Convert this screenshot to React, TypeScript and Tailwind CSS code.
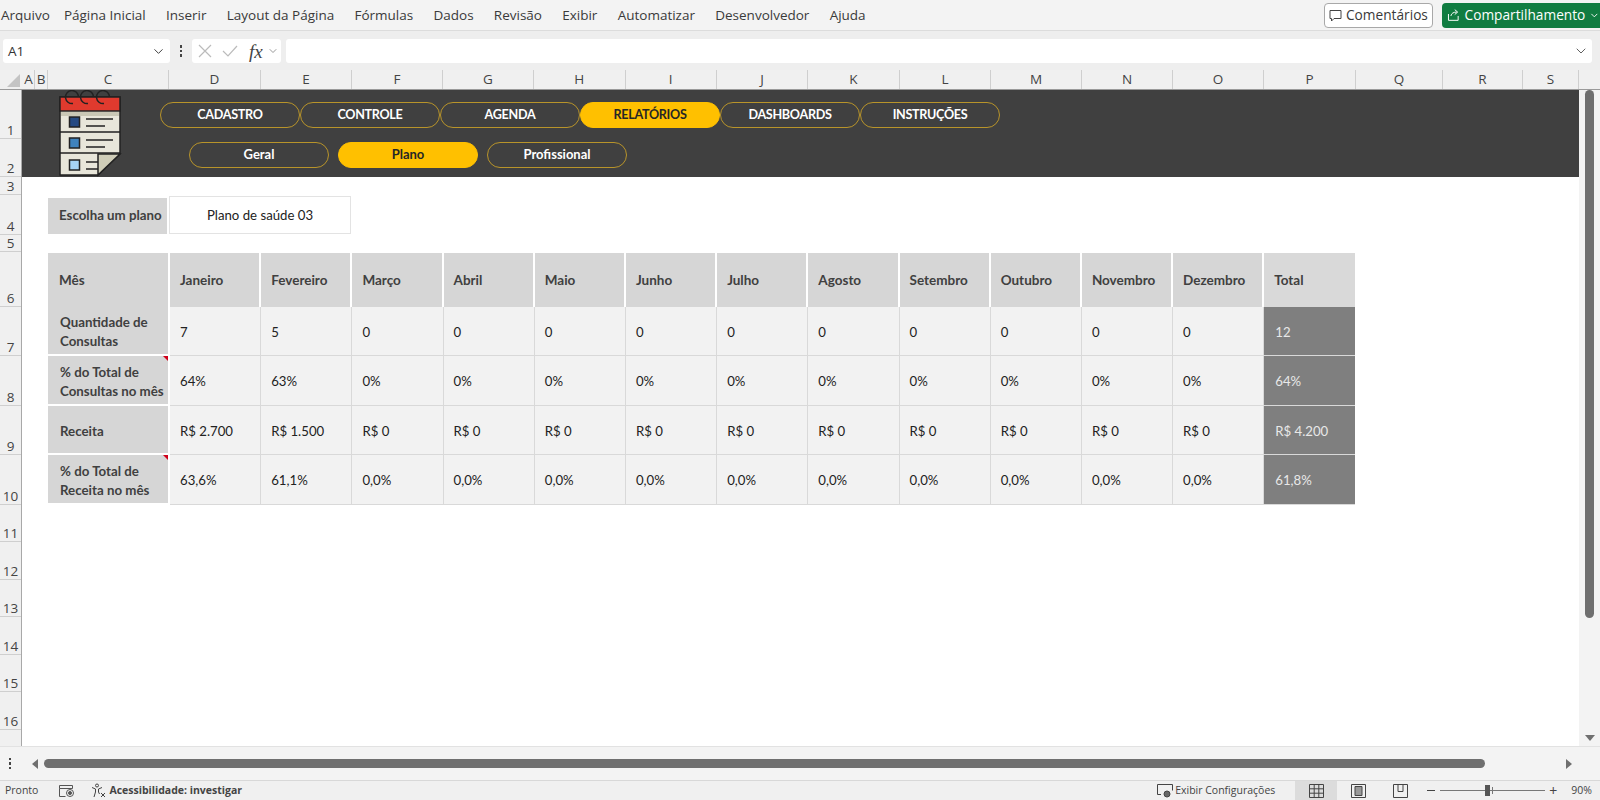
import { ChevronDown } from "lucide-react";

const ribbon = ["Página Inicial", "Inserir", "Layout da Página", "Fórmulas", "Dados", "Revisão", "Exibir", "Automatizar", "Desenvolvedor", "Ajuda"];

const columns = [
  { label: "A", w: "w-[12px]" },
  { label: "B", w: "w-[13px]" },
  { label: "C", w: "w-[121px]" },
  { label: "D", w: "w-[92px]" },
  { label: "E", w: "w-[91px]" },
  { label: "F", w: "w-[91px]" },
  { label: "G", w: "w-[91px]" },
  { label: "H", w: "w-[91.5px]" },
  { label: "I", w: "w-[91.5px]" },
  { label: "J", w: "w-[91px]" },
  { label: "K", w: "w-[92px]" },
  { label: "L", w: "w-[91px]" },
  { label: "M", w: "w-[91px]" },
  { label: "N", w: "w-[91px]" },
  { label: "O", w: "w-[91px]" },
  { label: "P", w: "w-[92px]" },
  { label: "Q", w: "w-[87px]" },
  { label: "R", w: "w-[80px]" },
  { label: "S", w: "w-[56px]" },
];

const rows = [
  { n: 1, h: "h-[49px]" },
  { n: 2, h: "h-[38px]" },
  { n: 3, h: "h-[18px]" },
  { n: 4, h: "h-[40px]" },
  { n: 5, h: "h-[17px]" },
  { n: 6, h: "h-[55px]" },
  { n: 7, h: "h-[49px]" },
  { n: 8, h: "h-[50px]" },
  { n: 9, h: "h-[49px]" },
  { n: 10, h: "h-[50px]" },
  { n: 11, h: "h-[37px]" },
  { n: 12, h: "h-[38px]" },
  { n: 13, h: "h-[37px]" },
  { n: 14, h: "h-[38px]" },
  { n: 15, h: "h-[37px]" },
  { n: 16, h: "h-[38px]" },
];

const months = ["Janeiro", "Fevereiro", "Março", "Abril", "Maio", "Junho", "Julho", "Agosto", "Setembro", "Outubro", "Novembro", "Dezembro"];

const table = [
  { label: "Quantidade de Consultas", h: "h-[49px]", note: false, values: ["7", "5", "0", "0", "0", "0", "0", "0", "0", "0", "0", "0"], total: "12" },
  { label: "% do Total de Consultas no mês", h: "h-[50px]", note: true, values: ["64%", "63%", "0%", "0%", "0%", "0%", "0%", "0%", "0%", "0%", "0%", "0%"], total: "64%" },
  { label: "Receita", h: "h-[49px]", note: false, values: ["R$ 2.700", "R$ 1.500", "R$ 0", "R$ 0", "R$ 0", "R$ 0", "R$ 0", "R$ 0", "R$ 0", "R$ 0", "R$ 0", "R$ 0"], total: "R$ 4.200" },
  { label: "% do Total de Receita no mês", h: "h-[50px]", note: true, values: ["63,6%", "61,1%", "0,0%", "0,0%", "0,0%", "0,0%", "0,0%", "0,0%", "0,0%", "0,0%", "0,0%", "0,0%"], total: "61,8%" },
];

function Pill({ label, active, caps }: { label: string; active?: boolean; caps?: boolean }) {
  const size = caps ? "text-[12.6px] tracking-[-0.3px]" : "text-[13px]";
  return (
    <div
      className={
        active
          ? `flex h-[26px] w-[140px] items-center justify-center rounded-full border border-[#ffc000] bg-[#ffc000] font-bold text-[#262626] ${size}`
          : `flex h-[26px] w-[140px] items-center justify-center rounded-full border border-[#b8942a] font-bold text-white ${size}`
      }
    >
      {label}
    </div>
  );
}

function Logo() {
  return (
    <svg width="64" height="87" viewBox="0 0 64 87" className="shrink-0">
      <path d="M1 7H61V64L39 85H1Z" fill="#e8e6da" stroke="#222" strokeWidth="1.5" />
      <rect x="1" y="7" width="60" height="14" fill="#e03a2e" stroke="#222" strokeWidth="1.5" />
      <rect x="2" y="22" width="58" height="4" fill="#c9c7b5" />
      <path d="M1 42H61M1 63H61" stroke="#222" strokeWidth="1.5" />
      <path d="M14 13.5A6.500 6.500 0 1 1 19.500 7M29 13.500A6.500 6.500 0 1 1 34.500 7M45 13.500A6.500 6.500 0 1 1 50.500 7" fill="none" stroke="#222" strokeWidth="1.5" />
      <rect x="10.5" y="27" width="10" height="10" fill="#264a82" stroke="#222" strokeWidth="1.5" />
      <path d="M27 29H54M27 36H46" stroke="#222" strokeWidth="1.5" />
      <rect x="10.5" y="48" width="10" height="10" fill="#3f83bd" stroke="#222" strokeWidth="1.5" />
      <path d="M27 50H54M27 57H46" stroke="#222" strokeWidth="1.5" />
      <rect x="10.5" y="70" width="10" height="10" fill="#a6d3f5" stroke="#222" strokeWidth="1.5" />
      <path d="M27 72H39M27 79H39" stroke="#222" strokeWidth="1.5" />
      <path d="M61 64L39 85V64Z" fill="#cfcdb8" stroke="#222" strokeWidth="1.5" />
    </svg>
  );
}

function GridIcon() {
  return (
    <svg width="15" height="14" viewBox="0 0 15 14" fill="none" stroke="#444" strokeWidth="1">
      <path d="M.5.5h14v13H.5zM.5 4.800h14M.5 9.200h14M5.200.5v13M9.800.5v13" />
    </svg>
  );
}

function PageIcon() {
  return (
    <svg width="15" height="14" viewBox="0 0 15 14" fill="none" stroke="#444" strokeWidth="1">
      <path d="M.5.5h14v13H.5z" />
      <path d="M4 2.500h7v9H4z" fill="#999" />
    </svg>
  );
}

function BreakIcon() {
  return (
    <svg width="15" height="14" viewBox="0 0 15 14" fill="none" stroke="#444" strokeWidth="1">
      <path d="M.5.5h14v13H.5zM5 .5v7h5v-7" />
    </svg>
  );
}

export default function App() {
  return (
    <div className="flex h-[800px] w-[1600px] flex-col overflow-hidden bg-white font-['Open_Sans',sans-serif] text-[#333]">
      {/* ribbon tabs */}
      <div className="flex h-[31px] shrink-0 items-center border-b border-[#dcdcdc] bg-[#f3f3f3] pl-[1px] text-[#3a3a3a]">
        <span className="mr-[14px] text-[13.5px]">Arquivo</span>
        <div className="flex gap-[20.25px] text-[13.5px]">
          {ribbon.map((r) => (
            <span key={r}>{r}</span>
          ))}
        </div>
        <div className="ml-auto flex items-center gap-[9px] text-[13.7px]">
          <div className="flex h-[25px] w-[109px] items-center gap-[4px] rounded-[4px] border border-[#a8a8a8] bg-white pl-[4px]">
            <svg width="13" height="13" viewBox="0 0 13 13" fill="none" stroke="#444" strokeWidth="1">
              <path d="M1 1.500h11v8H5l-2.500 2.500V9.500H1z" />
            </svg>
            <span>Comentários</span>
          </div>
          <div className="flex h-[25px] w-[158px] items-center gap-[4px] rounded-l-[4px] bg-[#107c41] pl-[5px] text-white">
            <svg width="14" height="14" viewBox="0 0 14 14" fill="none" stroke="#fff" strokeWidth="1">
              <path d="M1.500 6v6.500h10V8M4 8c.5-3 3-4 6-4M8 1.500L11 4 8 6.500" />
            </svg>
            <span>Compartilhamento</span>
            <ChevronDown size={11} />
          </div>
        </div>
      </div>

      {/* formula bar */}
      <div className="flex h-[39px] shrink-0 items-center bg-[#eeeeee] pt-[1px] pl-[3px] pr-[8px]">
        <div className="flex h-[24px] w-[167px] items-center justify-between rounded-[3px] bg-white pl-[5px] pr-[4px] text-[13.5px]">
          A1
          <ChevronDown size={15} strokeWidth={1.5} />
        </div>
        <div className="flex w-[22px] flex-col items-center gap-[2px]">
          <span className="size-[2.5px] bg-[#444]" />
          <span className="size-[2.5px] bg-[#444]" />
          <span className="size-[2.5px] bg-[#444]" />
        </div>
        <div className="flex h-[24px] w-[89px] items-center rounded-[3px] bg-white pl-[6px]">
          <svg width="14" height="14" viewBox="0 0 14 14" fill="none" stroke="#bbb" strokeWidth="1.2">
            <path d="M1 1l12 12M13 1L1 13" />
          </svg>
          <svg width="16" height="14" viewBox="0 0 16 14" fill="none" stroke="#bbb" strokeWidth="1.2" className="ml-[10px]">
            <path d="M1 7l5 5L15 2" />
          </svg>
          <span className="ml-[11px] font-['Liberation_Serif',serif] text-[19px] leading-none italic text-[#444]">fx</span>
          <ChevronDown size={12} strokeWidth={1.5} className="ml-[4px] text-[#777]" />
        </div>
        <div className="ml-[5px] flex h-[24px] flex-1 items-center justify-end rounded-[3px] bg-white pr-[3px]">
          <ChevronDown size={16} strokeWidth={1.4} className="text-[#555]" />
        </div>
      </div>

      {/* column headers */}
      <div className="flex h-[20px] shrink-0 border-b border-[#9a9a9a] bg-[#f0f0f0] text-[13.5px] text-[#444]">
        <div className="flex w-[23px] items-end justify-end pr-[3px] pb-[2px]">
          <div className="size-0 border-b-[13px] border-l-[13px] border-b-[#c4c4c4] border-l-transparent" />
        </div>
        {columns.map((c) => (
          <div key={c.label} className={`${c.w} flex shrink-0 items-center justify-center border-r border-[#cfcfcf] leading-none`}>
            {c.label}
          </div>
        ))}
      </div>

      {/* sheet */}
      <div className="flex h-[656px] shrink-0 overflow-hidden">
        <div className="flex w-[22px] shrink-0 flex-col border-r border-[#a8a8a8] bg-[#f0f0f0] text-[13.5px] text-[#444]">
          {rows.map((r) => (
            <div key={r.n} className={`${r.h} flex shrink-0 items-end justify-center border-b border-[#cfcfcf] leading-[15px]`}>
              {r.n}
            </div>
          ))}
        </div>

        <div className="flex w-[1557px] shrink-0 flex-col font-['Lato',sans-serif] text-[13.2px]">
          <div className="flex h-[87px] shrink-0 bg-[#404040] pl-[37px]">
            <Logo />
            <div className="flex flex-col pt-[12px] pl-[37px]">
              <div className="flex">
                <Pill caps label="CADASTRO" />
                <Pill caps label="CONTROLE" />
                <Pill caps label="AGENDA" />
                <Pill caps label="RELATÓRIOS" active />
                <Pill caps label="DASHBOARDS" />
                <Pill caps label="INSTRUÇÕES" />
              </div>
              <div className="mt-[14px] flex gap-[9px] pl-[29px]">
                <Pill label="Geral" />
                <Pill label="Plano" active />
                <Pill label="Profissional" />
              </div>
            </div>
          </div>

          <div className="flex flex-col pt-[19px] pl-[26px]">
            <div className="flex h-[38px]">
              <div className="mt-[2px] flex h-[36px] w-[119px] items-center whitespace-nowrap bg-[#d6d6d6] pl-[11px] text-[13.3px] font-bold text-[#404040]">Escolha um plano</div>
              <div className="ml-[2px] flex h-[38px] w-[182px] items-center justify-center border border-[#e3e3e3] pt-[1px] text-[#222]">Plano de saúde 03</div>
            </div>

            <div className="mt-[19px] flex flex-col">
              <div className="flex h-[54px] text-[13.5px] font-bold text-[#404040]">
                <div className="flex w-[122px] items-center border-r-2 border-white bg-[#d6d6d6] pl-[11px]">Mês</div>
                {months.map((m) => (
                  <div key={m} className="flex w-[91.2px] items-center border-r-2 border-white bg-[#d6d6d6] pl-[10px]">
                    {m}
                  </div>
                ))}
                <div className="flex w-[90.6px] items-center bg-[#d9d9d9] pl-[10px]">Total</div>
              </div>
              {table.map((row) => (
                <div key={row.label} className={`${row.h} flex`}>
                  <div className="relative flex w-[122px] items-center border-r-2 border-b-2 border-white bg-[#d6d6d6] pt-[3px] pr-[2px] pl-[12px] text-[13.3px] font-bold leading-[19px] text-[#404040]">
                    {row.label}
                    {row.note && <span className="absolute top-0 right-0 size-0 border-t-[5px] border-l-[5px] border-t-[#d0021b] border-l-transparent" />}
                  </div>
                  {row.values.map((v, i) => (
                    <div key={i} className="flex w-[91.2px] items-center border-r border-b border-[#d9d9d9] bg-[#f2f2f2] pt-[3px] pl-[10px] text-[#222]">
                      {v}
                    </div>
                  ))}
                  <div className="flex w-[90.6px] items-center border-b border-[#d9d9d9] bg-[#7f7f7f] pt-[3px] pl-[11px] text-[#e8e8e8]">{row.total}</div>
                </div>
              ))}
            </div>
          </div>
        </div>

        {/* vertical scrollbar */}
        <div className="flex w-[21px] shrink-0 flex-col items-center bg-[#f3f3f3]">
          <div className="mt-[-8px] flex flex-1 flex-col items-center">
            <div className="mb-[2px] size-0 border-x-[5px] border-b-[6px] border-x-transparent border-b-[#6f6f6f]" />
            <div className="h-[528px] w-[9px] rounded-full bg-[#6f6f6f]" />
            <div className="mt-auto mb-[5px] size-0 border-x-[5px] border-t-[6px] border-x-transparent border-t-[#6f6f6f]" />
          </div>
        </div>
      </div>

      {/* horizontal scrollbar */}
      <div className="flex h-[34px] shrink-0 items-center border-t border-[#e2e2e2] bg-[#f3f3f3]">
        <div className="flex w-[20px] flex-col items-center gap-[2px]">
          <span className="size-[2.5px] bg-[#444]" />
          <span className="size-[2.5px] bg-[#444]" />
          <span className="size-[2.5px] bg-[#444]" />
        </div>
        <div className="ml-[12px] size-0 border-y-[5px] border-r-[6px] border-y-transparent border-r-[#6f6f6f]" />
        <div className="ml-[6px] h-[9px] w-[1441px] rounded-full bg-[#6f6f6f]" />
        <div className="ml-[81px] size-0 border-y-[5px] border-l-[6px] border-y-transparent border-l-[#6f6f6f]" />
      </div>

      {/* status bar */}
      <div className="flex h-[20px] shrink-0 items-center border-t border-[#d8d8d8] bg-[#f0f0f0] pl-[5px] text-[10.5px] text-[#444]">
        <span>Pronto</span>
        <svg width="16" height="14" viewBox="0 0 16 14" fill="none" stroke="#555" strokeWidth="1" className="ml-[21px]">
          <path d="M.5 1.500h13v3H.5zM.5 4.500v8h6" />
          <circle cx="11" cy="9" r="3.500" />
          <circle cx="11" cy="9" r="1.500" fill="#555" />
        </svg>
        <svg width="16" height="15" viewBox="0 0 16 15" fill="none" stroke="#444" strokeWidth="1" className="ml-[16px]">
          <circle cx="6" cy="2.500" r="1.500" />
          <path d="M1 4.500l3.500 1.500v3L3 14M11 4.500L7.500 6v3l1 2M10 10l4 4M14 10l-4 4" />
        </svg>
        <span className="ml-[2px] font-bold">Acessibilidade: investigar</span>
        <div className="ml-auto flex items-center">
          <svg width="16" height="14" viewBox="0 0 16 14" fill="none" stroke="#444" strokeWidth="1" className="mr-[2px]">
            <path d="M4 10.500H.5V.5h15v6" />
            <circle cx="10" cy="10" r="3" fill="#666" />
          </svg>
          <span className="mr-[20px]">Exibir Configurações</span>
          <div className="flex h-[19px] w-[42px] items-center justify-center bg-[#dcdcdc]">
            <GridIcon />
          </div>
          <div className="flex w-[42px] justify-center">
            <PageIcon />
          </div>
          <div className="flex w-[42px] justify-center">
            <BreakIcon />
          </div>
          <div className="ml-[6px] flex items-center">
            <span className="h-px w-[8px] bg-[#444]" />
            <div className="relative ml-[5px] h-px w-[105px] bg-[#777]">
              <span className="absolute top-[-5px] left-[45px] h-[11px] w-[5px] bg-[#555]" />
              <span className="absolute top-[-3px] left-[52px] h-[7px] w-px bg-[#777]" />
            </div>
            <span className="ml-[4px] text-[14px] leading-none">+</span>
          </div>
          <span className="mr-[8px] ml-[14px] text-[10.5px]">90%</span>
        </div>
      </div>
    </div>
  );
}
